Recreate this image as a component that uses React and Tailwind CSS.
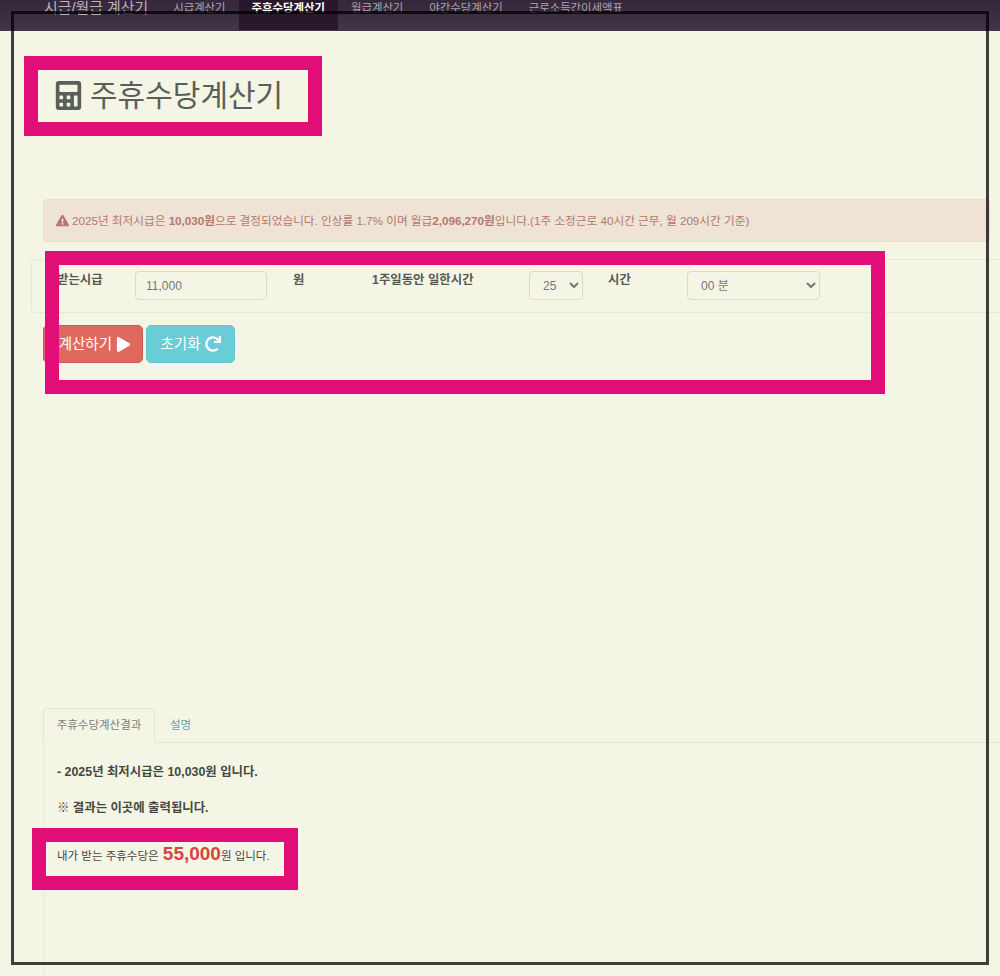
import { FaCalculator, FaExclamationTriangle, FaPlay, FaRedo } from 'react-icons/fa';

const navItems = [
  { label: '시급계산기' },
  { label: '주휴수당계산기', active: true },
  { label: '월급계산기' },
  { label: '야간수당계산기' },
  { label: '근로소득간이세액표' },
];

const Nav = () => (
  <nav className="flex h-[31px] items-start overflow-hidden bg-gradient-to-b from-[#35263a] to-[#43364a] pl-[44px]">
    <span className="mr-[12px] text-[14.9px] leading-[16px] text-[#b9b4ba]">시급/월급 계산기</span>
    {navItems.map((item) => (
      <a
        key={item.label}
        className={
          item.active
            ? 'flex h-[30px] bg-[#2a1729] px-[13px] pt-[1px] text-[11.4px] leading-[14px] font-bold text-white'
            : 'flex h-[30px] px-[13px] pt-[1px] text-[11.4px] leading-[14px] text-[#aaa6ac]'
        }
      >
        {item.label}
      </a>
    ))}
  </nav>
);

const InputForm = () => (
  <div className="-ml-[12px] flex h-[54px] w-[1100px] items-start rounded-[4px] border border-[#e9e8d0] pt-[11px] pl-[25px] text-[12.4px] leading-[18px] font-bold text-[#555a50]">
    <span className="w-[78px]">받는시급</span>
    <input
      readOnly
      value="11,000"
      className="h-[29px] w-[132px] rounded-[4px] border border-[#dcdcc4] bg-[#f5f5e6] px-[10px] text-[12px] font-normal text-[#777]"
    />
    <span className="ml-[26px] w-[79px]">원</span>
    <span className="w-[157px]">1주일동안 일한시간</span>
    <select className="h-[29px] w-[54px] rounded-[4px] border border-[#dcdcc4] bg-[#f5f5e6] pl-[9px] text-[12px] font-normal text-[#777]">
      <option>25</option>
    </select>
    <span className="ml-[25px] w-[79px]">시간</span>
    <select className="h-[29px] w-[133px] rounded-[4px] border border-[#dcdcc4] bg-[#f5f5e6] pl-[9px] text-[12px] font-normal text-[#777]">
      <option>00 분</option>
    </select>
  </div>
);

const App = () => (
  <div className="relative h-[976px] w-[1000px] overflow-hidden bg-[#f5f5e6] font-['Liberation_Sans','Noto_Sans_CJK_KR',sans-serif]">
    <Nav />
    <main className="pl-[43px]">
      <h1 className="mt-[44px] flex h-[40px] items-center gap-[8px] pl-[12px] text-[30px] font-normal text-[#59605a]">
        <FaCalculator className="h-[29px] w-[27px]" />
        주휴수당계산기
      </h1>

      <div className="mt-[84px] flex h-[43px] w-[947px] items-center gap-[3px] rounded-[4px] border border-[#eadfcf] bg-[#efe3d6] pl-[12px] text-[11.65px] text-[#b5776e]">
        <FaExclamationTriangle className="h-[13px] w-[13px]" />
        <span>
          2025년 최저시급은 <b>10,030원</b>으로 결정되었습니다. 인상률 1.7% 이며 월급<b>2,096,270원</b>입니다.(1주 소정근로 40시간 근무, 월 209시간 기준)
        </span>
      </div>

      <div className="mt-[17px]">
        <InputForm />
      </div>

      <div className="mt-[12px] flex gap-[3px]">
        <button className="flex h-[38px] w-[100px] items-center justify-end gap-[4px] rounded-[5px] border border-[#c9574f] bg-[#e0695f] pt-[1px] pr-[11px] text-[14.5px] text-white">
          계산하기 <FaPlay className="h-[15px] w-[15px]" />
        </button>
        <button className="flex h-[38px] w-[89px] items-center justify-center gap-[4px] rounded-[5px] border border-[#64c6d2] bg-[#6bccd8] pt-[1px] text-[14.5px] text-white">
          초기화 <FaRedo className="mb-[2px] h-[16px] w-[16px]" />
        </button>
      </div>

      <div className="mt-[345px] flex h-[35px] border-b border-[#e6e6d2]">
        <span className="flex h-[35px] w-[112px] items-center justify-center rounded-t-[4px] border border-[#e6e6d2] border-b-[#f5f5e6] bg-[#f5f5e6] pt-[1px] text-[11.5px] text-[#7c7f76]">
          주휴수당계산결과
        </span>
        <span className="flex h-[34px] items-center pt-[1px] pl-[15px] text-[11.5px] text-[#6f9fa8]">설명</span>
      </div>

      <section className="h-[240px] border-l border-[#e9e9d6] pl-[13px] text-[12.4px] text-[#45483f]">
        <p className="pt-[20px] leading-[18px] font-bold">- 2025년 최저시급은 10,030원 입니다.</p>
        <p className="mt-[18px] leading-[18px] font-bold">※ 결과는 이곳에 출력됩니다.</p>
        <p className="mt-[25px] flex items-baseline text-[11.5px] leading-[24px]">
          내가 받는 주휴수당은&nbsp;<b className="ml-[1px] text-[19px] text-[#d8433f]">55,000</b>원 입니다.
        </p>
      </section>
    </main>

    {/* 스크린샷 위에 그려진 표시 */}
    <div className="pointer-events-none absolute top-[11px] left-[11px] h-[954px] w-[978px] border-[3px] border-black/75" />
    <div className="pointer-events-none absolute top-[56px] left-[24px] h-[80px] w-[298px] border-[14px] border-[#e20e78]" />
    <div className="pointer-events-none absolute top-[251px] left-[45px] h-[143px] w-[840px] border-[14px] border-[#e20e78]" />
    <div className="pointer-events-none absolute top-[828px] left-[32px] h-[62px] w-[266px] border-[14px] border-[#e20e78]" />
  </div>
);

export default App;
